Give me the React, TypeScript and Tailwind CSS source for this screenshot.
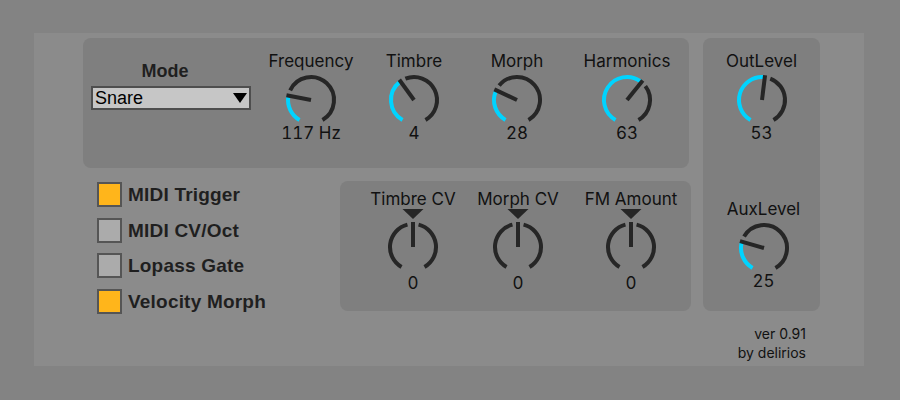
import React from 'react';

const DARK = '#262626';
const CYAN = '#00d4ff';

function pt(cx: number, cy: number, r: number, a: number) {
  const rad = (a * Math.PI) / 180;
  return [cx + r * Math.sin(rad), cy - r * Math.cos(rad)];
}

function arc(cx: number, cy: number, r: number, a1: number, a2: number) {
  const [x1, y1] = pt(cx, cy, r, a1);
  const [x2, y2] = pt(cx, cy, r, a2);
  const large = a2 - a1 > 180 ? 1 : 0;
  return `M ${x1} ${y1} A ${r} ${r} 0 ${large} 1 ${x2} ${y2}`;
}

// angles in degrees from 12 o'clock, clockwise; the dial runs -150..150
function Dial({ angle }: { angle: number }) {
  const cx = 28;
  const cy = 27;
  const r = 23;
  const [nx, ny] = pt(cx, cy, 25, angle);
  return (
    <svg width="56" height="50" viewBox="0 0 56 50">
      <path d={arc(cx, cy, r, -150, angle - 3)} stroke={CYAN} strokeWidth="4" fill="none" />
      <path d={arc(cx, cy, r, angle + 14, 150)} stroke={DARK} strokeWidth="4" fill="none" />
      <line x1={cx} y1={cy} x2={nx} y2={ny} stroke={DARK} strokeWidth="4" />
    </svg>
  );
}

function CenterDial() {
  const cx = 28;
  const cy = 38;
  const r = 23;
  return (
    <svg width="56" height="64" viewBox="0 0 56 64">
      <polygon points="17.5,0 38.5,0 28,10" fill={DARK} />
      <path d={arc(cx, cy, r, -150, -14)} stroke={DARK} strokeWidth="4" fill="none" />
      <path d={arc(cx, cy, r, 14, 150)} stroke={DARK} strokeWidth="4" fill="none" />
      <line x1={cx} y1={cy} x2={cx} y2={cy - 25} stroke={DARK} strokeWidth="4" />
    </svg>
  );
}

const labelCls = "text-[17px] leading-[20px] text-[#111] [font-family:Inter,'Noto_Sans',sans-serif] whitespace-nowrap";
const valueCls = labelCls + ' tabular-nums';

function Knob({ label, value, angle }: { label: string; value: string; angle: number }) {
  return (
    <div className="flex w-[96px] flex-col items-center">
      <div className={labelCls}>{label}</div>
      <div className="mt-[2px]">
        <Dial angle={angle} />
      </div>
      <div className={valueCls}>{value}</div>
    </div>
  );
}

function CvKnob({ label }: { label: string }) {
  return (
    <div className="flex w-[96px] flex-col items-center">
      <div className={labelCls}>{label}</div>
      <CenterDial />
      <div className={valueCls}>0</div>
    </div>
  );
}

function Toggle({ label, on }: { label: string; on: boolean }) {
  return (
    <div className="flex h-[25px] items-center gap-[6px]">
      <div
        className={
          'size-[25px] border-2 border-[#555555] ' + (on ? 'bg-[#ffb51b]' : 'bg-[#ababab]')
        }
      />
      <span className="text-[19px] font-bold leading-[25px] tracking-[0.2px] text-[#1f1f1f] [font-family:'Liberation_Sans',Arial,sans-serif]">
        {label}
      </span>
    </div>
  );
}

export default function App() {
  return (
    <div className="h-[400px] w-[900px] bg-[#838383] pl-[34px] pt-[33px]">
      <div className="flex h-[333px] w-[830px] bg-[#8b8b8b] pl-[49px] pt-[5px]">
        {/* left column */}
        <div className="flex w-[608px] flex-col">
          <div className="flex h-[130px] w-[606px] items-start rounded-[8px] bg-[#7f7f7f] pl-2 pt-[13px]">
            <div className="mt-[10px] flex w-[160px] flex-col">
              <div className="pr-3 text-center text-[18px] font-bold leading-[20px] text-[#1f1f1f] [font-family:'Liberation_Sans',Arial,sans-serif]">
                Mode
              </div>
              <div className="mt-[5px] flex h-[24px] items-center justify-between border-2 border-[#4e4e4e] bg-[#c6c6c6] pl-[2px] pr-[2px]">
                <span className="text-[18px] leading-[20px] text-black [font-family:'Liberation_Sans',Arial,sans-serif]">
                  Snare
                </span>
                <svg width="14" height="10" viewBox="0 0 14 10">
                  <polygon points="0,0 14,0 7,10" fill="#000" />
                </svg>
              </div>
            </div>
            <div className="ml-[12px] flex gap-[7px]">
              <Knob label="Frequency" value="117 Hz" angle={-79} />
              <Knob label="Timbre" value="4" angle={-36} />
              <Knob label="Morph" value="28" angle={-65} />
            </div>
            <div className="ml-[14px]">
              <Knob label="Harmonics" value="63" angle={39} />
            </div>
          </div>

          <div className="mt-[13px] flex items-start">
            <div className="ml-[14px] mt-[1px] flex w-[243px] flex-col gap-[10.5px]">
              <Toggle label="MIDI Trigger" on />
              <Toggle label="MIDI CV/Oct" on={false} />
              <Toggle label="Lopass Gate" on={false} />
              <Toggle label="Velocity Morph" on />
            </div>
            <div className="flex h-[130px] w-[351px] items-start rounded-[8px] bg-[#7f7f7f] pl-[25px] pt-[8px]">
              <CvKnob label="Timbre CV" />
              <div className="ml-[9px]">
                <CvKnob label="Morph CV" />
              </div>
              <div className="ml-[17px]">
                <CvKnob label="FM Amount" />
              </div>
            </div>
          </div>
        </div>

        {/* right column */}
        <div className="ml-[12px] flex w-[117px] flex-col">
          <div className="flex h-[273px] flex-col items-center rounded-[8px] bg-[#7f7f7f] pt-[13px]">
            <Knob label="OutLevel" value="53" angle={7} />
            <div className="mt-[56px] pl-[4px]">
              <Knob label="AuxLevel" value="25" angle={-74} />
            </div>
          </div>
          <div className="mt-[13px] pr-[14px] text-right text-[14px] leading-[19px] text-[#111] [font-family:Inter,'Noto_Sans',sans-serif]">
            <div>ver 0.91</div>
            <div>by delirios</div>
          </div>
        </div>
      </div>
    </div>
  );
}
